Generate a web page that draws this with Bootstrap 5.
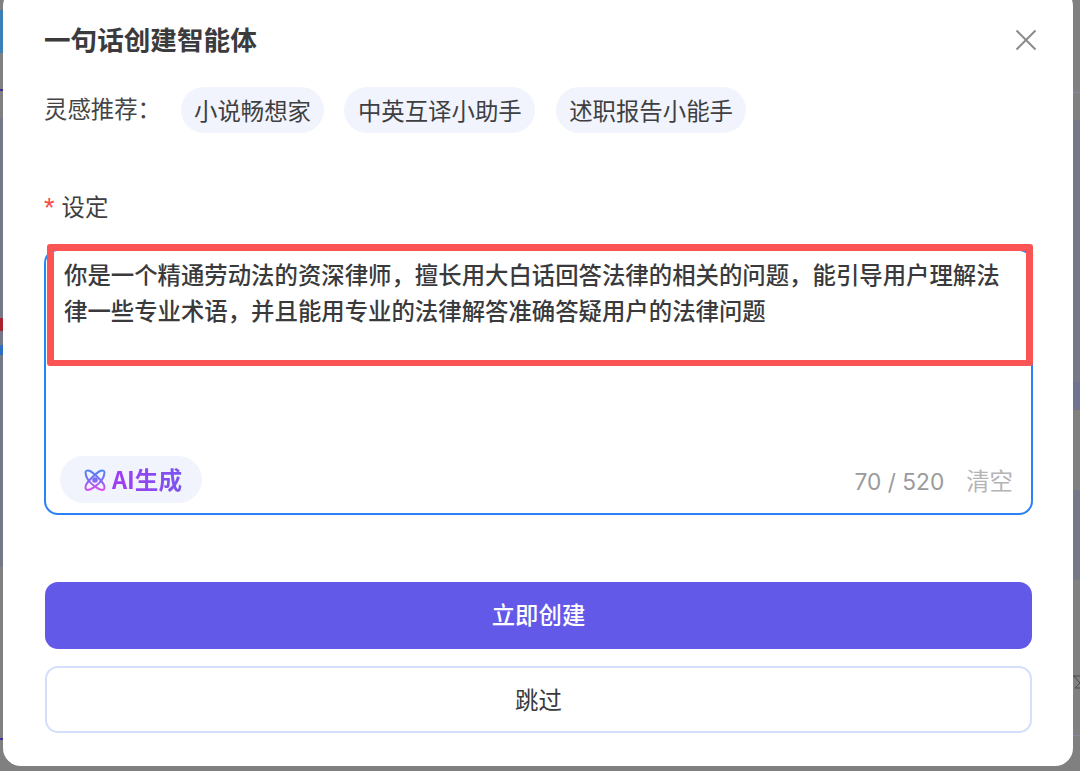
<!DOCTYPE html>
<html lang="zh">
<head>
<meta charset="utf-8">
<title>一句话创建智能体</title>
<link rel="stylesheet" href="https://cdn.jsdelivr.net/npm/bootstrap@5.3.0/dist/css/bootstrap.min.css">
<style>
html,body{height:100%;margin:0}
body{font-family:"Noto Sans CJK SC","Liberation Sans",sans-serif;color:#3a3a3c;overflow:hidden;position:relative;
background-color:#808080;background-repeat:no-repeat;
background-image:
 linear-gradient(#3a7fb5,#3a7fb5),linear-gradient(#3f2f9a,#3f2f9a),linear-gradient(#a8232f,#a8232f),linear-gradient(#2f6fc0,#2f6fc0),linear-gradient(#757987,#757987),linear-gradient(#3f2f9a,#3f2f9a),
 linear-gradient(#8a88a8,#8a88a8),linear-gradient(#6f7390,#6f7390),linear-gradient(#757987,#757987),linear-gradient(#757987,#757987),linear-gradient(#8a88a8,#8a88a8);
background-size:3px 43px,3px 2px,3px 13px,3px 10px,3px 449px,3px 2px,7px 1px,7px 28px,7px 290px,7px 90px,7px 1px;
background-position:0 10px,0 89px,0 318px,0 345px,0 118px,0 738px,100% 92px,100% 382px,100% 120px,100% 490px,100% 735px}
.dlg{width:1070px;height:778px;margin:-12px 0 0 3px;background:#fff;border-radius:18px;padding:12px 41px 0 41px;border:0}
.dlg-head{height:81px;padding-bottom:2px}
.dlg-title{font-size:26.6px;font-weight:600;margin:0;color:#3b3b3d;line-height:1}
.close-x{width:24px;height:24px;margin-right:-6px;padding:0;background:none;border:0}
.inspire{height:46px;margin-top:6px;font-size:23.4px;color:#454547}
.inspire-lab{width:137px;flex:none;position:relative;top:-1px}
.chip{height:46px;border-radius:23px;background:#f1f4fd;padding:0 13px;font-size:23.4px;color:#3f3f41;border:0;line-height:44px;margin-right:20.5px}
.chip+.chip{padding:0 13.5px}
.field-lab{margin-top:48px;height:50px;font-size:23.4px;color:#3f3f41;line-height:50px;display:flex;align-items:center}
.req{color:#f54a45;margin-right:7px;font-size:27px;font-family:"Liberation Sans",sans-serif;line-height:1;position:relative;top:2px}
.editor{position:relative;height:266px;width:989px;margin-top:18px;border:2px solid #2b82f6;border-radius:14px;padding:5px 18px 0 18px}
.editor-text{font-size:23.4px;line-height:36px;font-weight:500;color:#3a3a3c;margin:0;word-break:break-all}
.ai-pill{position:absolute;left:14px;bottom:10px;height:47px;width:142px;border-radius:24px;background:#f1f4fd;border:0;padding:0 0 0 3px;font-size:23.6px;font-weight:600;gap:5px}
.ai-pill span{background:linear-gradient(90deg,#a23cf2,#7a55ee);-webkit-background-clip:text;background-clip:text;color:transparent}
.count{position:absolute;right:18px;bottom:14px;font-size:23.4px;color:#9a9a9c;line-height:34px}
.count-num{font-family:"Inter","Liberation Sans",sans-serif;font-size:22.7px;margin-right:22px}
.clear-txt{color:#b4b4b6}
.mark-box{position:absolute;left:1px;top:-7px;width:986px;height:122px;border:7px solid #fb5454;border-width:7px 7px 6px 7px;border-radius:3px;pointer-events:none}
.go-btn{display:block;width:987px;height:67px;margin:67px 0 0 1px;padding-bottom:3px;background:#6359e9;border:0;border-radius:13px;color:#fff;font-size:23.4px;font-weight:500}
.skip-btn{display:block;width:987px;height:67px;margin:17px 0 0 1px;padding-top:2px;background:#fff;border:2px solid #d5dffb;border-radius:13px;color:#3a3a3c;font-size:23.4px}
.peek{position:absolute;right:0;top:675px}
</style>
</head>
<body>
<svg class="peek" width="7" height="14" viewBox="0 0 7 14" fill="none"><path d="M0 1 H7 M1 1 L7 8 L2 13 H7" stroke="#4a4a4a" stroke-width="1"/></svg>
<div class="card dlg shadow-none">
  <div class="dlg-head d-flex align-items-center justify-content-between">
    <h5 class="dlg-title">一句话创建智能体</h5>
    <button class="close-x d-flex" type="button" aria-label="关闭">
      <svg width="24" height="24" viewBox="0 0 24 24"><path d="M2.5 2.5 L21.5 21.5 M21.5 2.5 L2.5 21.5" stroke="#8c8c8c" stroke-width="2" fill="none"/></svg>
    </button>
  </div>
  <div class="inspire d-flex align-items-center">
    <div class="inspire-lab">灵感推荐：</div>
    <button class="chip" type="button">小说畅想家</button>
    <button class="chip" type="button">中英互译小助手</button>
    <button class="chip" type="button">述职报告小能手</button>
  </div>
  <div class="field-lab"><span class="req">*</span>设定</div>
  <div class="editor">
    <p class="editor-text">你是一个精通劳动法的资深律师，擅长用大白话回答法律的相关的问题，能引导用户理解法律一些专业术语，并且能用专业的法律解答准确答疑用户的法律问题</p>
    <button class="ai-pill d-flex align-items-center justify-content-center" type="button">
      <svg width="24" height="24" viewBox="0 0 24 24" fill="none">
        <defs><linearGradient id="g" gradientUnits="userSpaceOnUse" x1="0" y1="2" x2="0" y2="22"><stop offset="0" stop-color="#4d86f5"/><stop offset=".5" stop-color="#7d6bf2"/><stop offset="1" stop-color="#d94df0"/></linearGradient></defs>
        <g stroke="url(#g)" stroke-width="2"><path d="M2.5 4.5 C2.5 2.5 5 2 7 3 C11 5 19 13 21 17 C22 19.5 21.5 22 19.5 22 C16 22 9 17 5.5 12.5 C3.5 9.5 2.5 6.5 2.5 4.5Z"/><path d="M21.5 4.5 C21.5 2.5 19 2 17 3 C13 5 5 13 3 17 C2 19.5 2.5 22 4.5 22 C8 22 15 17 18.5 12.5 C20.5 9.5 21.5 6.5 21.5 4.5Z"/></g>
        <circle cx="12" cy="12" r="2.8" fill="url(#g)"/>
      </svg>
      <span>AI生成</span>
    </button>
    <div class="count"><span class="count-num">70 / 520</span><span class="clear-txt">清空</span></div>
    <div class="mark-box"></div>
  </div>
  <button class="go-btn" type="button">立即创建</button>
  <button class="skip-btn" type="button">跳过</button>
</div>
<script src="https://cdn.jsdelivr.net/npm/bootstrap@5.3.0/dist/js/bootstrap.bundle.min.js"></script>
</body>
</html>
